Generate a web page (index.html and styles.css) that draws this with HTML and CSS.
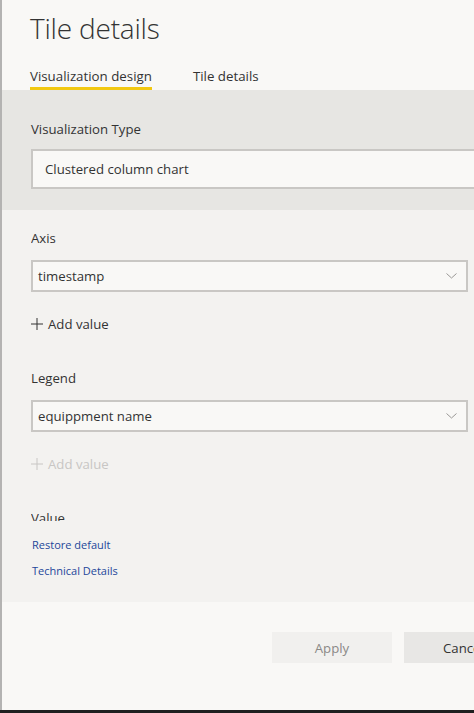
FILE: index.html
```html
<!DOCTYPE html>
<html>
<head>
<meta charset="utf-8">
<link rel="stylesheet" href="styles.css">
</head>
<body>
<div class="panel">
  <header class="header">
    <h1 class="title">Tile details</h1>
    <nav class="tabs">
      <span class="tab active">Visualization design</span>
      <span class="tab">Tile details</span>
    </nav>
  </header>
  <section class="viz">
    <div class="label">Visualization Type</div>
    <div class="viz-input">Clustered column chart</div>
  </section>
  <section class="fields">
    <div class="scroll">
      <div class="field">
        <div class="label">Axis</div>
        <div class="dropdown"><span>timestamp</span><svg class="chev" width="11" height="6" viewBox="0 0 11 6"><path d="M0.5 0.5 L5.5 5 L10.5 0.5" fill="none" stroke="#9a9896" stroke-width="1"/></svg></div>
        <div class="add"><svg class="plus" width="12" height="12" viewBox="0 0 12 12"><path d="M6 0 V12 M0 6 H12" stroke="currentColor" stroke-width="1"/></svg>Add value</div>
      </div>
      <div class="field">
        <div class="label">Legend</div>
        <div class="dropdown"><span>equippment name</span><svg class="chev" width="11" height="6" viewBox="0 0 11 6"><path d="M0.5 0.5 L5.5 5 L10.5 0.5" fill="none" stroke="#9a9896" stroke-width="1"/></svg></div>
        <div class="add disabled"><svg class="plus" width="12" height="12" viewBox="0 0 12 12"><path d="M6 0 V12 M0 6 H12" stroke="currentColor" stroke-width="1"/></svg>Add value</div>
      </div>
      <div class="field">
        <div class="label">Value</div>
      </div>
    </div>
    <div class="links">
      <a class="link">Restore default</a>
      <a class="link">Technical Details</a>
    </div>
  </section>
  <footer class="footer">
    <button class="btn apply">Apply</button>
    <button class="btn cancel">Cancel</button>
  </footer>
</div>
</body>
</html>
```
FILE: styles.css
```css
html, body {
  margin: 0;
  padding: 0;
}
body {
  width: 474px;
  height: 713px;
  overflow: hidden;
  background: #1f1f1f;
  font-family: "Open Sans", "Noto Sans", sans-serif;
  color: #333333;
}
.panel {
  width: 540px;
  height: 710px;
  border-left: 2px solid #b4b3b2;
  background: #f9f8f6;
  display: flex;
  flex-direction: column;
}
.header {
  height: 90px;
  padding-left: 28px;
  box-sizing: border-box;
  display: flex;
  flex-direction: column;
}
.title {
  margin: 0;
  padding-top: 10px;
  font-size: 28px;
  font-weight: 300;
  line-height: 37px;
  color: #333;
  letter-spacing: -0.2px;
}
.tabs {
  display: flex;
  gap: 41px;
  margin-top: 20px;
}
.tab {
  font-size: 13.3px;
  line-height: 18px;
  padding-bottom: 2px;
  border-bottom: 3px solid transparent;
  color: #333;
}
.tab.active {
  border-bottom-color: #f2c811;
}
.viz {
  height: 120px;
  background: #e7e6e3;
  padding-left: 29px;
  box-sizing: border-box;
  padding-top: 29px;
}
.label {
  font-size: 13.2px;
  line-height: 20px;
  color: #333;
}
.viz-input {
  margin-top: 10px;
  height: 40px;
  box-sizing: border-box;
  border: 2px solid #c9c7c4;
  background: #f9f8f6;
  padding-left: 12px;
  font-size: 13.2px;
  line-height: 36px;
}
.fields {
  height: 392px;
  background: #f3f2f0;
  padding-left: 29px;
  box-sizing: border-box;
}
.scroll {
  height: 311px;
  overflow: hidden;
  width: 437px;
  padding-top: 18px;
  box-sizing: border-box;
}
.field {
  height: 140px;
}
.dropdown {
  margin-top: 12px;
  height: 32px;
  box-sizing: border-box;
  border: 2px solid #c9c7c4;
  background: #f9f8f6;
  padding: 0 9px 0 5px;
  font-size: 13.2px;
  line-height: 28px;
  display: flex;
  justify-content: space-between;
  align-items: center;
}
.add {
  margin-top: 22px;
  font-size: 13.2px;
  line-height: 20px;
  display: flex;
  align-items: center;
  gap: 5px;
  color: #333;
}
.add.disabled {
  color: #c8c6c4;
}
.links {
  display: flex;
  flex-direction: column;
  gap: 9px;
  padding-top: 15px;
  padding-left: 1px;
}
.link {
  font-size: 11px;
  line-height: 17px;
  color: #23479a;
}
.footer {
  flex: 1;
  background: #f9f8f6;
  display: flex;
  gap: 12px;
  padding-left: 270px;
  padding-top: 30px;
  box-sizing: border-box;
  align-items: flex-start;
}
.btn {
  width: 120px;
  height: 31px;
  border: none;
  font-family: inherit;
  font-size: 13.2px;
  padding: 0;
}
.apply {
  background: #f1f0ee;
  color: #8a8886;
}
.cancel {
  background: #e8e7e5;
  color: #333;
  text-align: left;
  padding-left: 39px;
}
```
